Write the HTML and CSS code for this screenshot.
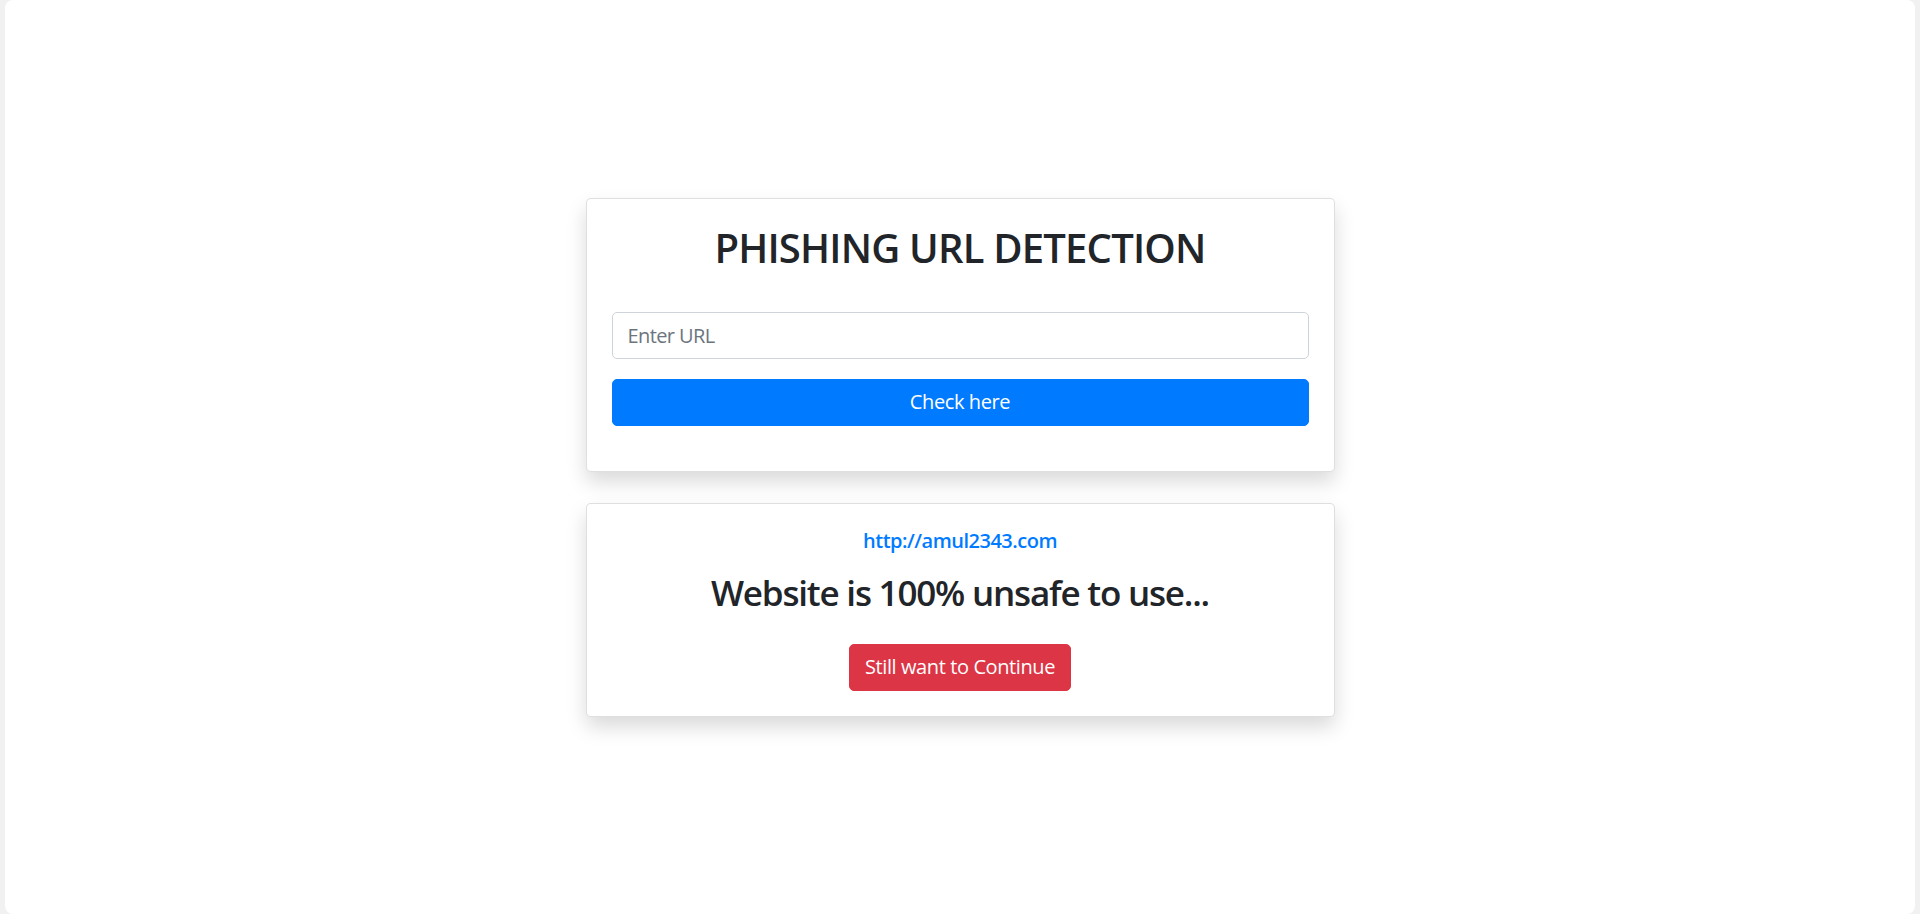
FILE: index.html
```html
<!DOCTYPE html>
<html lang="en">
<head>
<meta charset="utf-8">
<title>Phishing URL Detection</title>
<link rel="stylesheet" href="styles.css">
</head>
<body>
<div class="panel">
  <main class="stack">
    <section class="card">
      <h2 class="title">PHISHING URL DETECTION</h2>
      <form class="form" onsubmit="return false">
        <input class="field" type="text" placeholder="Enter URL">
        <button class="btn btn-primary btn-block" type="submit">Check here</button>
      </form>
    </section>
    <section class="card card-result">
      <h6 class="url"><a href="#">http://amul2343.com</a></h6>
      <h3 class="verdict">Website is 100% unsafe to use...</h3>
      <button class="btn btn-danger" type="button">Still want to Continue</button>
    </section>
  </main>
</div>
</body>
</html>
```
FILE: styles.css
```css
* { box-sizing: border-box; }
html, body { height: 100%; }
body {
  margin: 0;
  background: #f1f1f1;
  font-family: "Open Sans", "Noto Sans", sans-serif;
  color: #212529;
}
.panel {
  height: 100%;
  margin: 0 5px;
  background: #fff;
  border-radius: 8px;
  display: flex;
  align-items: center;
  justify-content: center;
}
.stack {
  width: 749px;
  display: flex;
  flex-direction: column;
  gap: 31px;
}
.card {
  background: #fff;
  border: 1px solid rgba(0,0,0,.125);
  border-radius: 5px;
  box-shadow: 0 10px 20px rgba(0,0,0,.15);
  padding: 25px;
}
.title {
  margin: 0 0 40px;
  text-align: center;
  font-size: 40px;
  line-height: 48px;
  font-weight: 600;
  letter-spacing: -0.8px;
}
.form {
  display: flex;
  flex-direction: column;
  gap: 20px;
  margin-bottom: 20px;
}
.field {
  height: 47px;
  padding: 7px 15px;
  font: inherit;
  font-size: 20px;
  letter-spacing: -0.6px;
  color: #495057;
  border: 1px solid #ced4da;
  border-radius: 5px;
  outline: none;
}
.field::placeholder { color: #6c757d; }
.btn {
  font: inherit;
  font-size: 20px;
  line-height: 30px;
  letter-spacing: -0.4px;
  padding: 7.5px 15px;
  border: 1px solid transparent;
  border-radius: 5px;
  color: #fff;
  cursor: pointer;
}
.btn-primary { background: #007bff; border-color: #007bff; }
.btn-danger { background: #dc3545; border-color: #dc3545; }
.card-result {
  display: flex;
  flex-direction: column;
  align-items: center;
}
.url {
  margin: 0 0 19px;
  font-size: 20px;
  line-height: 24px;
  font-weight: 600;
  letter-spacing: -0.5px;
}
.url a { color: #007bff; text-decoration: none; }
.verdict {
  margin: 0 0 30px;
  font-size: 35px;
  line-height: 42px;
  font-weight: 600;
  letter-spacing: -1.2px;
}
```
